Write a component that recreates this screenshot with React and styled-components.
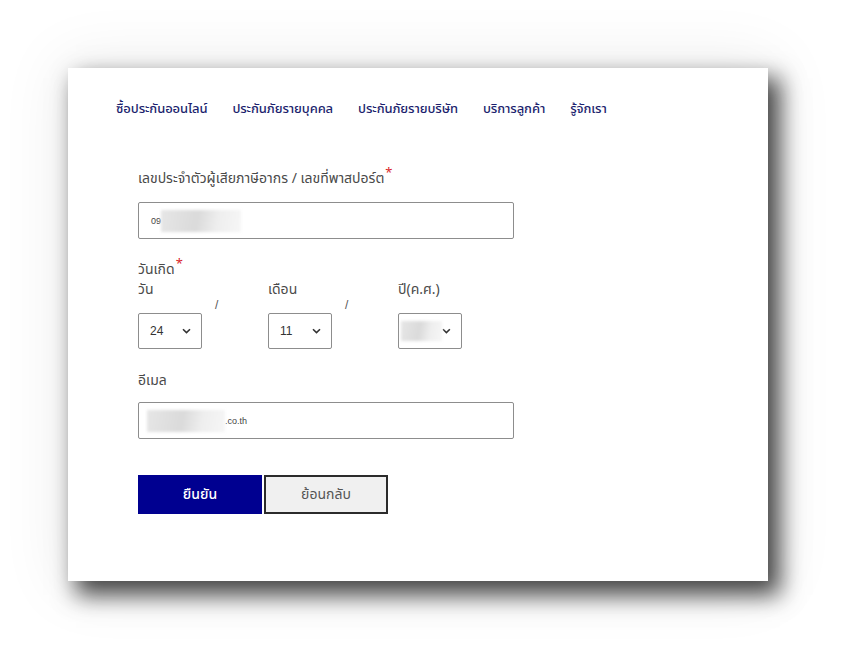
import React from "react";
import styled, { createGlobalStyle } from "styled-components";

const Global = createGlobalStyle`
  html, body { margin: 0; padding: 0; background: #ffffff; }
  body { font-family: "Noto Sans Thai", "Noto Sans", "DejaVu Sans", sans-serif; }
  * { box-sizing: border-box; }
`;

const Page = styled.div`
  width: 852px;
  height: 665px;
  padding: 68px 0 0 68px;
  background: #ffffff;
  overflow: hidden;
`;

const Card = styled.div`
  width: 700px;
  height: 513px;
  background: #ffffff;
  box-shadow: 10px 12px 22px 2px rgba(0, 0, 0, 0.72),
    0 0 60px 8px rgba(0, 0, 0, 0.07);
  padding: 30px 0 0 48px;
  display: flex;
  flex-direction: column;
`;

const Nav = styled.nav`
  display: flex;
  gap: 25px;
  height: 22px;
  align-items: center;
`;

const NavItem = styled.span`
  font-size: 13px;
  font-weight: 500;
  color: #1c1f6e;
  letter-spacing: -0.1px;
  white-space: nowrap;
`;

const Form = styled.form`
  margin-top: 50px;
  margin-left: 22px;
  display: flex;
  flex-direction: column;
`;

const Label = styled.div`
  font-size: 14px;
  color: #4a4a4a;
  line-height: 18px;
  white-space: nowrap;
`;

const Star = styled.sup`
  color: #d9262b;
  font-size: 13px;
  line-height: 0;
  margin-left: 1px;
`;

const TextBox = styled.div`
  width: 376px;
  height: 37px;
  border: 1px solid #8d8d8d;
  border-radius: 2px;
  margin-top: ${(p) => p.$mt || 0}px;
  display: flex;
  align-items: center;
  padding-left: ${(p) => p.$pl || 12}px;
  font-family: "Liberation Sans", Arial, sans-serif;
  font-size: 9px;
  color: #444;
`;

const Blur = styled.span`
  display: inline-block;
  width: ${(p) => p.$w}px;
  height: ${(p) => p.$h || 22}px;
  background: linear-gradient(100deg, #e6e6e6 0%, #dadada 45%, #eeeeee 70%, #f6f6f6 100%);
  filter: blur(1.5px);
`;

const DateSection = styled.div`
  margin-top: 22px;
  display: flex;
  flex-direction: column;
`;

const DateRow = styled.div`
  display: flex;
  align-items: flex-start;
  margin-top: 2px;
`;

const DateCol = styled.div`
  display: flex;
  flex-direction: column;
  width: 64px;
`;

const Slash = styled.div`
  width: 66px;
  padding-left: 13px;
  padding-top: 17px;
  font-size: 12px;
  color: #555;
  font-family: "Liberation Sans", Arial, sans-serif;
`;

const Select = styled.div`
  margin-top: 14px;
  width: 64px;
  height: 36px;
  border: 1px solid #8d8d8d;
  border-radius: 2px;
  display: flex;
  align-items: center;
  justify-content: space-between;
  padding: 0 10px 0 11px;
  font-family: "Liberation Sans", Arial, sans-serif;
  font-size: 12px;
  color: #333;
  ${(p) => p.$blank && "padding-left: 2px;"}
`;

const Chevron = () => (
  <svg width="9" height="6" viewBox="0 0 9 6">
    <path d="M1 1.2 L4.5 4.6 L8 1.2" fill="none" stroke="#333" strokeWidth="1.6" />
  </svg>
);

const EmailLabel = styled(Label)`
  margin-top: 23px;
`;

const Buttons = styled.div`
  display: flex;
  gap: 2px;
  margin-top: 36px;
`;

const Button = styled.button`
  width: 124px;
  height: 39px;
  border: ${(p) => (p.$primary ? "none" : "2px solid #2b2b2b")};
  background: ${(p) => (p.$primary ? "#000090" : "#f0f0f0")};
  color: ${(p) => (p.$primary ? "#ffffff" : "#555")};
  font-family: "Noto Sans Thai", "Noto Sans", "DejaVu Sans", sans-serif;
  font-size: 14px;
  font-weight: ${(p) => (p.$primary ? 500 : 400)};
  padding: 0;
  cursor: pointer;
`;

export default function App() {
  return (
    <>
      <Global />
      <Page>
        <Card>
          <Nav>
            <NavItem>ซื้อประกันออนไลน์</NavItem>
            <NavItem>ประกันภัยรายบุคคล</NavItem>
            <NavItem>ประกันภัยรายบริษัท</NavItem>
            <NavItem>บริการลูกค้า</NavItem>
            <NavItem>รู้จักเรา</NavItem>
          </Nav>
          <Form>
            <Label>
              เลขประจำตัวผู้เสียภาษีอากร / เลขที่พาสปอร์ต<Star>*</Star>
            </Label>
            <TextBox $mt={14}>
              09
              <Blur $w={80} />
            </TextBox>
            <DateSection>
              <Label>
                วันเกิด<Star>*</Star>
              </Label>
              <DateRow>
                <DateCol>
                  <Label>วัน</Label>
                  <Select>
                    24
                    <Chevron />
                  </Select>
                </DateCol>
                <Slash>/</Slash>
                <DateCol>
                  <Label>เดือน</Label>
                  <Select>
                    11
                    <Chevron />
                  </Select>
                </DateCol>
                <Slash>/</Slash>
                <DateCol>
                  <Label>ปี(ค.ศ.)</Label>
                  <Select $blank>
                    <Blur $w={42} $h={20} />
                    <Chevron />
                  </Select>
                </DateCol>
              </DateRow>
            </DateSection>
            <EmailLabel>อีเมล</EmailLabel>
            <TextBox $mt={12} $pl={8}>
              <Blur $w={78} />
              .co.th
            </TextBox>
            <Buttons>
              <Button type="button" $primary>
                ยืนยัน
              </Button>
              <Button type="button">ย้อนกลับ</Button>
            </Buttons>
          </Form>
        </Card>
      </Page>
    </>
  );
}
